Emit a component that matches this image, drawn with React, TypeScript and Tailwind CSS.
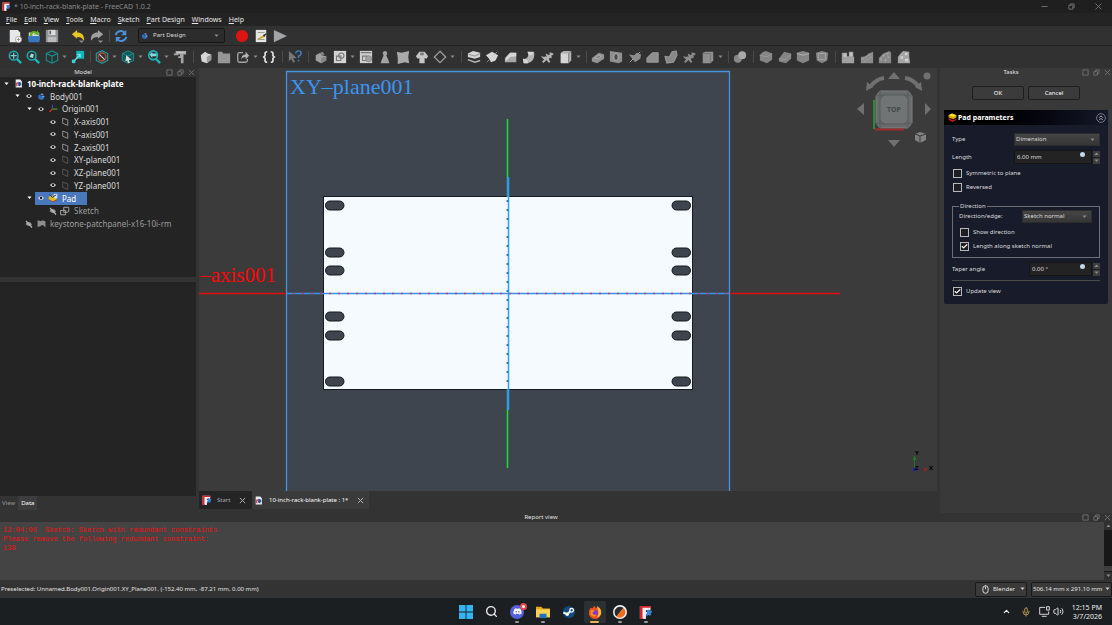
import React, { useState } from "react";
import { Search, Mic, ChevronUp, Volume2, Mouse, Check } from "lucide-react";
import { FaDiscord } from "react-icons/fa";

interface SvgProps {
  children: React.ReactNode;
  className?: string;
}

const Svg: React.FC<SvgProps> = ({ children, className = "size-[14px]" }) => {
  return (
    <svg viewBox="0 0 16 16" fill="none" className={`shrink-0 ${className}`} aria-hidden="true">
      {children}
    </svg>
  );
};

const Caret: React.FC<{ className?: string }> = ({ className = "" }) => (
  <svg viewBox="0 0 6 4" className={`w-[5px] shrink-0 fill-[#8a8a8a] ${className}`} aria-hidden="true">
    <path d="M0.5 0.5h5L3 3.5z" />
  </svg>
);

const FreeCadLogo: React.FC<{ className?: string }> = ({ className }) => (
  <Svg className={className}>
    <path d="M1 1h12v3H8v12H1z" fill="#d9dde2" />
    <path d="M1 1h13l-1 4H5v11H1z" fill="#d8262f" />
    <path d="M4 3h9v3H7v2h5v3H7v4H4z" fill="#f3f4f6" />
    <path d="M9 6l2-1 1 1.5 2-.5 1 2-1.500 1.200.5 1.800-2 1.200-1.200-1.200L9 13l-1.200-2L9 9z" fill="#3b82d9" />
  </Svg>
);

const DocIcon: React.FC<{ className?: string }> = ({ className }) => (
  <Svg className={className}>
    <path d="M3 1h8l3 3v11H3z" fill="#e9edf2" />
    <path d="M4 6h5v2H6v5H4z" fill="#c9232d" />
    <path d="M8 5l4 1 1 4-3 3-3-2z" fill="#28529b" />
  </Svg>
);

const BodyIcon: React.FC<{ className?: string }> = ({ className }) => (
  <Svg className={className}>
    <path d="M2 6l4-2 1 4 4 0 2 3-4 3-5-1-2-3z" fill="#2d6fc0" />
    <path d="M6 4l3-2 3 2-3 2zM7 8l4-2 3 2-3 2z" fill="#5b9ce6" />
  </Svg>
);

const PadIcon: React.FC<{ className?: string }> = ({ className }) => (
  <Svg className={className}>
    <path d="M1 9l7 4 7-3v2l-7 4-7-4z" fill="#c81e1e" />
    <path d="M1 4l6-3 8 3v4l-6 3-8-3z" fill="#d6a800" />
    <path d="M1 4l6-3 8 3-6 3z" fill="#f7e02a" />
  </Svg>
);

// the feature icon in the tree carries a sketch in front of the solid
const PadFeatureIcon: React.FC<{ className?: string }> = ({ className }) => (
  <Svg className={className}>
    <path d="M1 10l7 4 7-3-6-4z" fill="#c81e1e" />
    <path d="M1 6l6-2 7 3v3l-6 3-7-3z" fill="#e3b81a" />
    <path d="M9 1h6v7l-4 1-2-3z" fill="#cfe0f3" />
    <path d="M2 2l5 5 6-4" stroke="#1c3f78" strokeWidth="1.600" />
  </Svg>
);

const grey = "#b4b4b4";
const light = "#d6d6d6";
const dark = "#858585";

const icons: Record<string, React.ReactNode> = {
  new: (
    <>
      <path d="M2 1h9l3 3v11H2z" fill="#e6e8ea" />
      <circle cx="12" cy="12" r="3.500" fill="#fff" stroke="#9b9b9b" />
      <path d="M12 10v4M10 12h4" stroke="#888" />
    </>
  ),
  open: (
    <>
      <path d="M2 4h12v9H2z" fill="#d6d9dc" />
      <path d="M1 8h14l-1 7H2z" fill="#3978bf" />
      <path d="M3 8c0-5 4-7 8-5l1-2 2 6-6-1 1.500-1.500C7 4 6 6 6 8z" fill="#62b51c" />
    </>
  ),
  save: (
    <>
      <path d="M1 1h14v14H1z" fill="#8f9294" />
      <path d="M4 1h8v6H4z" fill="#d9dbdc" />
      <path d="M3 9h10v6H3z" fill="#b9bcbe" />
      <path d="M5 2h2v4H5z" fill="#666" />
    </>
  ),
  undo: (
    <>
      <path d="M1 6l6-5v3c5 0 8 3 8 8l-1 1c-1-3-3-4-7-4v2z" fill="#e8c523" />
      <path d="M9 13h6l-3 3z" fill="#8a8a8a" />
    </>
  ),
  redo: (
    <>
      <path d="M15 6L9 1v3c-5 0-8 3-8 8l1 1c1-3 3-4 7-4v2z" fill="#9ea1a3" />
      <path d="M9 13h6l-3 3z" fill="#8a8a8a" />
    </>
  ),
  refresh: (
    <>
      <path d="M2 7a6 6 0 0 1 10-3M14 9a6 6 0 0 1-10 3" stroke="#4c8fd6" strokeWidth="2.400" />
      <path d="M14 1v6H8zM2 15V9h6z" fill="#4c8fd6" />
    </>
  ),
  record: <circle cx="8" cy="8" r="7" fill="#dd1414" />,
  macro: (
    <>
      <path d="M2 1h12v14H2z" fill="#e4e6e2" />
      <path d="M4 4h8M4 12h8" stroke="#8b9a86" />
      <path d="M4 11l7-4 1 2-7 3z" fill="#c9a11a" />
      <path d="M10 7l5-3-3 5z" fill="#333" />
    </>
  ),
  play: <path d="M1 1l15 7-15 7z" fill="#a2a4a5" />,
  fitAll: (
    <>
      <circle cx="6.500" cy="6.500" r="5" stroke="#1fa6ad" strokeWidth="1.800" />
      <path d="M6.500 3v7M3 6.500h7" stroke="#7fcfd3" strokeWidth="1.400" />
      <path d="M10 10l5 5" stroke="#1fb6bd" strokeWidth="2.600" />
    </>
  ),
  fitSel: (
    <>
      <circle cx="6.500" cy="6.500" r="5" stroke="#1fa6ad" strokeWidth="1.800" />
      <path d="M4 8l2-4 3 1-1 4z" fill="#9fdfe2" />
      <path d="M10 10l5 5" stroke="#1fb6bd" strokeWidth="2.600" />
    </>
  ),
  cube: <path d="M1.500 4L8 1l6.500 3v8L8 15l-6.500-3zM1.500 4L8 7l6.500-3M8 7v8" stroke="#148f8f" strokeWidth="1.300" />,
  fly: (
    <>
      <path d="M6 1h9v9H6z" fill="#0fb5b9" />
      <path d="M1 11h4v4H1z" fill="#31d3d6" />
      <path d="M4 12l6-6M7 5h3.500v3.500" stroke="#7fe3e3" strokeWidth="1.300" />
    </>
  ),
  drawStyle: (
    <>
      <path d="M1.500 4L8 .8 14.500 4v8L8 15.200 1.500 12z" stroke="#1e9da0" strokeWidth="1.300" />
      <circle cx="8" cy="8" r="4.500" stroke="#b94a3e" strokeWidth="1.600" />
      <path d="M5 5l6 6" stroke="#c9c9c9" strokeWidth="1.500" />
    </>
  ),
  selectCube: (
    <>
      <path d="M1.500 4L8 1l6.500 3v8L8 15l-6.500-3z" fill="#12565a" stroke="#1c9396" />
      <path d="M2 4l6 3 6-3" stroke="#1c9396" />
      <path d="M6 6l6 5-3 .5 1 3-2 .5-1-3-2 1z" fill="#ddd" />
    </>
  ),
  zoomCam: (
    <>
      <circle cx="7" cy="6" r="5" stroke="#1fb6bd" strokeWidth="1.800" />
      <path d="M3 5l3-3v2h5v3H6v2z" fill="#7fd9dc" />
      <path d="M10 10l5 5" stroke="#1fb6bd" strokeWidth="2.600" />
    </>
  ),
  measure: (
    <>
      <path d="M3 1h12v4H3zM1 4h5v2H1zM8 5h4v10H9V9H6V7h2z" fill="#a5a5a5" />
      <path d="M4 3h10" stroke="#d0d0d0" />
    </>
  ),
  part: (
    <>
      <path d="M2 6l5-4 3 2 4 1v6l-5 4-6-2z" fill={light} />
      <path d="M9 8l5-3v6l-5 4z" fill="#9c9c9c" />
    </>
  ),
  folder: <path d="M1 2h5l1 2h8v11H1z" fill="#969696" />,
  share: (
    <>
      <path d="M8 3H4Q2 3 2 5v7q0 2 2 2h7q2 0 2-2v-2" stroke="#a5a5a5" strokeWidth="1.500" />
      <path d="M6 11c0-4 2-6 5-6V2l4 4.500-4 4V8C8 8 7 9 6 11z" fill={grey} />
    </>
  ),
  braces: (
    <path
      d="M6 2Q3.500 2 3.500 4v2.500L2 8l1.500 1.500V12q0 2 2.500 2M10 2q2.500 0 2.500 2v2.500L14 8l-1.500 1.500V12q0 2-2.500 2"
      stroke="#e2e2e2"
      strokeWidth="1.900"
    />
  ),
  whatsThis: (
    <>
      <path d="M1 1l9 8-4 .5 2 4-2 1-2-4-3 2z" fill="#777" />
      <path d="M9 4q0-3 3-3t3 2.500Q15 6 12 7v2M12 11v2" stroke="#3e7fc1" strokeWidth="1.700" />
    </>
  ),
  body: (
    <>
      <path d="M2 6l5-3 2 3 5 1v5l-6 3-6-3z" fill="#a0a0a0" />
      <path d="M7 3l3-1 2 3-3 1zM8 9l6-2v5l-6 3z" fill={dark} />
    </>
  ),
  sketch: (
    <>
      <path d="M1 1h14v14H1z" fill="#d4d4d4" />
      <path d="M4 7h5v5H4z" stroke="#777" strokeWidth="1.200" />
      <circle cx="9.500" cy="6.500" r="3" stroke="#777" strokeWidth="1.200" />
    </>
  ),
  sketchEdit: (
    <>
      <path d="M1 1h14v14H1z" fill="#cfcfcf" />
      <path d="M4 7h5v5H4zM2 3h12" stroke="#777" strokeWidth="1.200" />
      <circle cx="11" cy="10" r="3.500" fill="#a0a0a0" stroke="#888" />
    </>
  ),
  pawn: <path d="M8 1a2.800 2.800 0 0 1 1.500 5l2.500 6 1 3H3l1-3 2.500-6A2.800 2.800 0 0 1 8 1z" fill="#a5a5a5" />,
  surface: <path d="M1 2l5 1 9-2-1 7 1 7-5-1-8 2 0-7z" fill="#aaa" />,
  shirt: (
    <>
      <path d="M5 2h6l4 5-2 3-2-1v6H5V9l-2 1-2-3z" fill="#c5c5c5" />
      <path d="M6 3h4v3H6z" fill="#777" />
    </>
  ),
  diamond: <path d="M8 1.500L14.500 8 8 14.500 1.500 8z" stroke="#9c9c9c" strokeWidth="1.500" />,
  pad: (
    <>
      <path d="M1 4l6-3 8 2v5l-6 2-8-2z" fill={light} />
      <path d="M2 5l7 2 6-3" stroke="#888" />
      <path d="M1 11l8 3 6-2" stroke={grey} strokeWidth="1.800" />
    </>
  ),
  revolve: (
    <>
      <path d="M1 6l7-4 7 4-3 6-5 2-3-5z" fill={light} />
      <path d="M2 14l4-4M11 5l3-3" stroke="#8d8d8d" />
    </>
  ),
  loft: (
    <>
      <path d="M1 14V9l6-6h7v11z" fill="#a6a6a6" />
      <path d="M7 3h7v4l-7 1-5 5V9z" fill={light} />
    </>
  ),
  pipe: (
    <>
      <path d="M1 10c5 1 7-3 6-8l7 1c1 8-4 13-12 12z" fill={grey} />
      <path d="M6 2h8l-3 4H8zM1 10l5 1 1 4-5 0z" fill={light} />
    </>
  ),
  helix: <path d="M2 14l3-3-2-2 5 1-1-4 4 2 0-4 3 1M4 8l4 2 3-5M7 11l3 3" stroke={grey} strokeWidth="2.200" />,
  prim: (
    <>
      <path d="M2 3l3-2h9v11l-3 3H2z" fill="#b0b0b0" />
      <path d="M2 4h9v11H2z" fill={light} />
      <path d="M11 4l3-3M11 4v11" stroke="#777" />
    </>
  ),
  pocket: (
    <>
      <path d="M1 9l8-6 6 2v5l-8 5-6-2z" fill="#939393" />
      <path d="M4 9l5-3 3 1-5 3z" fill="#7a7a7a" stroke="#b0b0b0" />
    </>
  ),
  hole: (
    <>
      <path d="M1 1l14 2v10l-4 2-10-2z" fill="#8f8f8f" />
      <ellipse cx="8" cy="8" rx="2.500" ry="4" fill="#4a4a4a" stroke="#b9b9b9" />
    </>
  ),
  groove: (
    <>
      <path d="M1 5l6 1 3-3 5 2-1 5-6 4-3-4z" fill="#8c8c8c" />
      <path d="M2 14l4-4M11 5l3-3" stroke="#b0b0b0" />
    </>
  ),
  subLoft: <path d="M1 14V9l6-6h7v11z" fill="#8f8f8f" stroke="#9c9c9c" />,
  subPipe: <path d="M1 7l5 1 3-6 5-1 1 5-4 8-8 1z" fill="#888" stroke="#a0a0a0" />,
  subHelix: <path d="M2 14l3-3-2-2 5 1-1-4 4 2 0-4 3 1M4 8l4 2 3-5M7 11l3 3" stroke="#8d8d8d" strokeWidth="2.200" />,
  subPrim: (
    <>
      <path d="M2 3l3-1h9v10l-3 3H2z" fill="#8f8f8f" />
      <path d="M2 4h9v11" stroke="#747474" />
    </>
  ),
  boolean: (
    <>
      <circle cx="5.500" cy="10" r="4.500" fill="#888" />
      <circle cx="10.500" cy="6" r="4.500" fill="#a9a9a9" />
    </>
  ),
  fillet: (
    <>
      <path d="M1 6q2-4 7-5l7 3v7l-6 4-8-3z" fill="#858585" />
      <path d="M1 6l8 2 6-4" stroke="#9a9a9a" />
    </>
  ),
  chamfer: (
    <>
      <path d="M1 10l6-8 8 2v6l-6 5-8-2z" fill="#858585" />
      <path d="M1 10l8 1 6-6" stroke="#9a9a9a" />
    </>
  ),
  draft: (
    <>
      <path d="M1 3l7-2 7 2v9l-7 3-7-3z" fill="#858585" />
      <path d="M1 4l7 2 7-2" stroke="#b5b5b5" />
    </>
  ),
  thickness: (
    <>
      <path d="M1 3l7-2 7 2-1 9-6 3-6-3z" fill="#858585" />
      <path d="M4 4h8v7H4z" stroke="#a8a8a8" />
    </>
  ),
  mirror: (
    <>
      <path d="M1 3h6v4h2V2h5v5l1 1v7H1z" fill="#a0a0a0" />
      <path d="M3 4h3v4H3zM10 3h3v4h-3z" fill="#c4c4c4" />
    </>
  ),
  linear: (
    <>
      <path d="M1 8l5-1 4-3 5-2v13H1z" fill="#8c8c8c" />
      <path d="M2 11l11-7M4 14l9-6" stroke="#a5a5a5" strokeDasharray="3 1" />
    </>
  ),
  polar: (
    <>
      <path d="M1 9l5-5 7-3 2 2v12H1z" fill="#888" />
      <path d="M3 12q2-7 9-8M8 13q1-4 5-5" stroke="#a5a5a5" strokeWidth="2" strokeDasharray="3 2" />
    </>
  ),
  multi: (
    <>
      <path d="M1 8l3-4 3-3 7 1v6l1 7H1z" fill="#a5a5a5" />
      <path d="M4 7h3v3H4zM9 3h3v3H9zM9 10h4v3H9z" fill="#cfcfcf" />
    </>
  ),
};

interface ToolProps {
  name: string;
  menu?: boolean;
}

const Tool: React.FC<ToolProps> = ({ name, menu }) => {
  return (
    <button type="button" aria-label={name} className="flex items-center gap-[3px] hover:brightness-125">
      <Svg>{icons[name]}</Svg>
      {menu && <Caret />}
    </button>
  );
};

// a trailing "+" marks a tool that opens a menu
const toolGroups = [
  { width: "w-[77px]", sep: "", tools: ["fitAll", "fitSel", "cube+", "fly"] },
  { width: "w-[92px]", sep: "w-[10px]", tools: ["drawStyle+", "selectCube+", "zoomCam+", "measure"] },
  { width: "w-[77px]", sep: "w-3", tools: ["part", "folder", "share+", "braces"] },
  { width: "w-[14px]", sep: "w-3", tools: ["whatsThis"] },
  { width: "w-[141px]", sep: "w-3", tools: ["body", "sketch+", "sketchEdit", "pawn", "surface", "shirt", "diamond+"] },
  { width: "w-[114px]", sep: "w-3", tools: ["pad", "revolve", "loft", "pipe", "helix", "prim+"] },
  { width: "w-[132px]", sep: "w-[10px]", tools: ["pocket", "hole", "groove", "subLoft", "subPipe", "subHelix", "subPrim+"] },
  { width: "w-[14px]", sep: "w-[10px]", tools: ["boolean"] },
  { width: "w-[70px]", sep: "w-3", tools: ["fillet", "chamfer", "draft", "thickness"] },
  { width: "w-[70px]", sep: "w-3", tools: ["mirror", "linear", "polar", "multi"] },
];

const Divider: React.FC = () => <span className="h-3 w-px shrink-0 bg-[#4a4a4a]"></span>;

const TitleBar: React.FC = () => {
  return (
    <header className="flex h-[13px] items-center bg-[#1f1f1f] pl-[2px] text-[7px] text-[#8b8b8b]">
      <FreeCadLogo className="size-[9px]" />
      <h1 className="ml-[3px]">* 10-inch-rack-blank-plate - FreeCAD 1.0.2</h1>
      <div className="ml-auto flex gap-5 pr-[10px]">
        <button type="button" aria-label="Minimize">
          <Svg className="size-[7px]"><path d="M1 8h14" stroke="#777" strokeWidth="2" /></Svg>
        </button>
        <button type="button" aria-label="Restore">
          <Svg className="size-[7px]">
            <path d="M2 5h9v9H2zM5 5V2h9v9h-3" stroke="#777" strokeWidth="2" />
          </Svg>
        </button>
        <button type="button" aria-label="Close">
          <Svg className="size-[7px]"><path d="M1 1l14 14M15 1L1 15" stroke="#777" strokeWidth="2" /></Svg>
        </button>
      </div>
    </header>
  );
};

const menus = ["File", "Edit", "View", "Tools", "Macro", "Sketch", "Part Design", "Windows", "Help"];

const MenuBar: React.FC = () => {
  return (
    <nav className="flex h-[13px] items-center gap-[7px] bg-[#242424] pl-[6px] text-[7px] text-[#e8e8e8]">
      {menus.map((item) => (
        <button key={item} type="button">
          <span className="underline">{item[0]}</span>
          {item.slice(1)}
        </button>
      ))}
    </nav>
  );
};

const Toolbars: React.FC = () => {
  return (
    <div className="bg-[#313131]">
      <div className="flex h-5 items-center border-b border-[#242424] pl-2">
        <div className="flex w-[51px] justify-between">
          <Tool name="new" />
          <Tool name="open" />
          <Tool name="save" />
        </div>
        <div className="ml-3 flex gap-[5px]">
          <Tool name="undo" />
          <Tool name="redo" />
        </div>
        <div className="flex w-[10px] justify-center"><Divider /></div>
        <Tool name="refresh" />
        <div className="relative ml-[10px] flex w-[87px] items-center">
          <span className="pointer-events-none absolute left-[3px]"><BodyIcon className="size-[8px]" /></span>
          <select
            aria-label="Workbench"
            className="h-[15px] w-full appearance-none rounded-[2px] border border-[#161616] bg-[#2c2c2c] pl-[14px] text-[#dddddd]"
          >
            <option>Part Design</option>
          </select>
          <Caret className="pointer-events-none absolute right-[6px]" />
        </div>
        <div className="ml-[10px] flex gap-[5px]">
          <Tool name="record" />
          <Tool name="macro" />
          <Tool name="play" />
        </div>
      </div>
      <div className="flex h-[22px] items-center pl-2">
        {toolGroups.map((group, i) => (
          <React.Fragment key={i}>
            {i > 0 && (
              <span className={`flex shrink-0 justify-center ${group.sep}`}><Divider /></span>
            )}
            <div className={`flex shrink-0 justify-between ${group.width}`}>
              {group.tools.map((t) => (
                <Tool key={t} name={t.replace("+", "")} menu={t.endsWith("+")} />
              ))}
            </div>
          </React.Fragment>
        ))}
      </div>
    </div>
  );
};

interface DockTitleProps {
  title: string;
}

const DockTitle: React.FC<DockTitleProps> = ({ title }) => {
  return (
    <div className="flex h-[9px] items-center text-[#e0e0e0]">
      <h2 className="flex-1 text-center">{title}</h2>
      <span className="flex gap-1 pr-px">
        <Svg className="size-[7px]"><path d="M2 2h12v12H2z" stroke="#747474" strokeWidth="2" /></Svg>
        <Svg className="size-[7px]"><path d="M2 6h8v8H2zM6 6V2h8v8h-4" stroke="#747474" strokeWidth="2" /></Svg>
        <Svg className="size-[7px]"><path d="M2 2l12 12M14 2L2 14" stroke="#747474" strokeWidth="2" /></Svg>
      </span>
    </div>
  );
};

const Eye: React.FC = () => (
  <Svg className="size-[6px]">
    <path d="M0 8q8-10 16 0-8 10-16 0z" fill="#e8e8e8" />
    <circle cx="8" cy="8" r="3.500" fill="#222" />
  </Svg>
);

const EyeOff: React.FC = () => (
  <Svg className="size-[8px]">
    <path d="M1 8q7-8 13 1-6 6-13-1z" fill="#9a9a9a" />
    <path d="M2 2l12 13" stroke="#b5b5b5" strokeWidth="2.500" />
  </Svg>
);

const PlaneIcon: React.FC<{ color: string }> = ({ color }) => (
  <Svg className="size-[9px]">
    <path d="M3 2l9 3v10l-9-4z" stroke={color} strokeWidth="1.600" />
  </Svg>
);

const treeIcons: Record<string, React.ReactNode> = {
  doc: <DocIcon className="size-[9px]" />,
  body: <BodyIcon className="size-[9px]" />,
  origin: (
    <Svg className="size-[9px]">
      <path d="M6 9V1" stroke="#3558c9" strokeWidth="1.600" />
      <path d="M6 9l-5 5" stroke="#e02a2a" strokeWidth="2.400" />
      <path d="M6 9h9" stroke="#4c8d20" strokeWidth="2.400" />
    </Svg>
  ),
  axis: <PlaneIcon color="#9a9a9a" />,
  plane: <PlaneIcon color="#5a5a5a" />,
  pad: <PadFeatureIcon className="size-[10px]" />,
  sketch: (
    <Svg className="size-[10px]">
      <path d="M1 7h8v7H1z" stroke="#aaa" strokeWidth="1.500" />
      <path d="M6 2h8v7l-3 1H6z" stroke="#aaa" strokeWidth="1.500" />
    </Svg>
  ),
  mesh: (
    <Svg className="size-[9px]"><path d="M1 2l6 2 2-2 6 2v11l-4-4-3 0-2 2-5 1z" fill="#8d8d8d" /></Svg>
  ),
};

interface TreeRow {
  label: string;
  icon: string;
  indent: string;
  arrow?: boolean;
  eye?: "on" | "off";
  style?: string;
}

const tree: TreeRow[] = [
  { label: "10-inch-rack-blank-plate", icon: "doc", indent: "pl-0", arrow: true, style: "font-bold text-white" },
  { label: "Body001", icon: "body", indent: "pl-[11px]", arrow: true, eye: "on" },
  { label: "Origin001", icon: "origin", indent: "pl-[23px]", arrow: true, eye: "on" },
  { label: "X-axis001", icon: "axis", indent: "pl-[35px]", eye: "on" },
  { label: "Y-axis001", icon: "axis", indent: "pl-[35px]", eye: "on" },
  { label: "Z-axis001", icon: "axis", indent: "pl-[35px]", eye: "on" },
  { label: "XY-plane001", icon: "plane", indent: "pl-[35px]", eye: "on" },
  { label: "XZ-plane001", icon: "plane", indent: "pl-[35px]", eye: "on" },
  { label: "YZ-plane001", icon: "plane", indent: "pl-[35px]", eye: "on" },
  { label: "Pad", icon: "pad", indent: "pl-[23px]", arrow: true, eye: "on" },
  { label: "Sketch", icon: "sketch", indent: "pl-[35px]", eye: "off", style: "text-[#9c9c9c]" },
  { label: "keystone-patchpanel-x16-10i-rm", icon: "mesh", indent: "pl-[11px]", eye: "off", style: "text-[#9c9c9c]" },
];

const ModelPanel: React.FC = () => {
  const [selected, setSelected] = useState("Pad");

  return (
    <aside className="flex w-[196px] shrink-0 flex-col">
      <DockTitle title="Model" />
      <div className="h-[200px] bg-[#242424]">
        <ul className="grid h-[153px] auto-rows-fr text-[8px] text-[#dadada]">
          {tree.map((row) => (
            <li key={row.label} className={`flex items-center ${row.indent}`}>
              <span className="flex w-3 shrink-0 justify-center">
                {row.arrow && <Caret className="fill-white" />}
              </span>
              <button
                type="button"
                onClick={() => setSelected(row.label)}
                className={`flex h-full items-center pr-[11px] whitespace-nowrap ${
                  selected === row.label ? "bg-[#4a78bd] text-white" : ""
                } ${row.style ?? ""}`}
              >
                {row.eye && (
                  <span className="flex w-3 justify-center">{row.eye === "on" ? <Eye /> : <EyeOff />}</span>
                )}
                <span className="mr-[3px] flex w-3 justify-center">{treeIcons[row.icon]}</span>
                {row.label}
              </button>
            </li>
          ))}
        </ul>
      </div>
      <div className="mt-[5px] flex-1 bg-[#242424]"></div>
      <div className="flex h-[14px] items-center">
        <button type="button" className="h-full px-[2px] text-[#9a9a9a]">View</button>
        <button type="button" className="ml-px h-full bg-[#3d3d3d] px-[3px] text-white">Data</button>
      </div>
      <div className="h-[3px]"></div>
    </aside>
  );
};

const slotRows = [205, 252, 270, 316, 335, 381];

const NavigationCube: React.FC = () => (
  <g fill="#707070">
    <path d="M894 72l6 7h-12zM894 147l6-7h-12zM857 109l7-6v12zM931 109l-6-6v12z" />
    <path d="M884 78q-8 1-14 9" stroke="#707070" strokeWidth="4" fill="none" />
    <path d="M866 91l1-9 6 5z" />
    <path d="M905 78q8 1 14 9" stroke="#707070" strokeWidth="4" fill="none" />
    <path d="M922 91l-1-9-6 5z" />
    <circle cx="927" cy="76" r="3.500" />
    <path d="M880 91h28l4 5v27l-4 5h-28l-4-5V96z" fill="#686b6c" stroke="#7c7f80" />
    <path d="M884 95h20l4 4v21l-4 4h-20l-4-4V99z" fill="#707475" stroke="#585b5c" />
    <path d="M876 96l8-1M880 91v8M912 96l-8-1M908 91v8M876 123l8 1M880 128v-8M912 123l-8 1M908 128v-8" stroke="#585b5c" />
    <text x="894" y="112" textAnchor="middle" className="fill-[#44494b] text-[7px] font-bold">TOP</text>
    <path d="M874 100v29" stroke="#2f8a34" strokeWidth="2" />
    <path d="M875 129.500h29" stroke="#a32a2a" strokeWidth="2" />
    <path d="M915 134l5-2 6 2v6l-6 3-5-3z" fill="#828282" />
    <path d="M915 134l5 2 6-2M920 136v7" stroke="#3b3b3b" fill="none" />
  </g>
);

const Viewport: React.FC = () => {
  return (
    <svg
      viewBox="199 68 738 423"
      preserveAspectRatio="xMidYMin slice"
      className="min-h-0 w-full flex-1 bg-[#3b3b3b]"
      role="img"
      aria-label="3D view"
    >
      <path d="M286.500 500V71.500h443V500" fill="#3f454f" stroke="#4393df" strokeWidth="1.300" />
      <text x="290" y="94" className="fill-[#3d94ee] font-['Liberation_Serif',serif] text-[22px]">
        XY–plane001
      </text>
      <text x="276" y="282" textAnchor="end" className="fill-[#ff0505] font-['Liberation_Serif',serif] text-[21px]">
        –axis001
      </text>
      <rect x="323.500" y="196.500" width="369" height="193" fill="#f5faff" stroke="#171b20" />
      {slotRows.map((y) => (
        <g key={y} fill="#3f454f" stroke="#14181d">
          <rect x="325.500" y={y - 4} width="18.500" height="9" rx="4.500" />
          <rect x="672" y={y - 4} width="18.500" height="9" rx="4.500" />
        </g>
      ))}
      <path d="M199 293.500h87M730 293.500h110" stroke="#e01010" strokeWidth="1.500" />
      <path d="M286 293.500h444" stroke="#3b8ff0" strokeWidth="1.500" />
      <path d="M293 293.500h437" stroke="#b8405c" strokeDasharray="2 7" strokeWidth="1.500" />
      <path d="M507.500 119v58M507.500 410v58" stroke="#18e032" strokeWidth="1.500" />
      <path d="M508 177v20M508 390v20" stroke="#2da0dc" strokeWidth="2.500" />
      <path d="M508.500 196v195" stroke="#3b9bf0" strokeWidth="1.500" />
      <path d="M507.500 200v190" stroke="#1c88b8" strokeDasharray="2 7" strokeWidth="2" />
      <NavigationCube />
      <path d="M914.500 469v-9" stroke="#1f7a24" />
      <path d="M912.500 460l2-5 2 5z" fill="#1f7a24" />
      <circle cx="914.500" cy="469.500" r="1.700" fill="#1a1ab8" />
      <circle cx="925.500" cy="469.500" r="1.700" fill="#8f2323" />
      <g className="fill-black text-[6px] font-bold">
        <text x="915" y="455">Y</text>
        <text x="915" y="470">Z</text>
        <text x="929" y="470">X</text>
      </g>
    </svg>
  );
};

const TabClose: React.FC = () => (
  <Svg className="size-[7px]"><path d="M2 2l12 12M14 2L2 14" stroke="#b5b5b5" strokeWidth="2.200" /></Svg>
);

const CenterArea: React.FC = () => {
  return (
    <main className="flex min-w-0 flex-1 flex-col">
      <Viewport />
      <div className="flex h-[18px]">
        <button type="button" className="flex w-[53px] items-center bg-[#242424] pl-[3px] text-[#a8a8a8]">
          <FreeCadLogo className="size-[10px]" />
          <span className="mr-auto ml-[5px]">Start</span>
          <span className="mr-[6px]"><TabClose /></span>
        </button>
        <button type="button" className="flex w-[117px] items-center bg-[#3b3b3b] pl-[2px] text-white">
          <DocIcon className="size-[9px]" />
          <span className="mr-auto ml-[6px]">10-inch-rack-blank-plate : 1*</span>
          <span className="mr-[5px]"><TabClose /></span>
        </button>
      </div>
      <div className="h-[4px]"></div>
    </main>
  );
};

interface CheckFieldProps {
  label: string;
  checked?: boolean;
}

const CheckField: React.FC<CheckFieldProps> = ({ label, checked }) => {
  return (
    <label className="flex h-[14px] items-center gap-1">
      <span className="relative flex size-[9px] items-center justify-center">
        <input
          type="checkbox"
          defaultChecked={checked}
          className="peer size-[9px] appearance-none border border-[#b8b8b8] bg-[#1d1f25]"
        />
        <Check className="pointer-events-none absolute hidden size-[7px] text-white peer-checked:block" strokeWidth={4} />
      </span>
      {label}
    </label>
  );
};

interface FieldProps {
  id: string;
  value: string;
  width: string;
}

const SelectField: React.FC<FieldProps> = ({ id, value, width }) => {
  return (
    <span className={`relative flex items-center ${width}`}>
      <select
        id={id}
        className="h-[13px] w-full appearance-none border border-[#2c2c2c] bg-linear-to-b from-[#454545] to-[#363636] pl-px text-[#dcdcdc]"
      >
        <option>{value}</option>
      </select>
      <Caret className="pointer-events-none absolute right-[5px]" />
    </span>
  );
};

const SpinField: React.FC<FieldProps> = ({ id, value, width }) => {
  return (
    <span className={`relative flex h-[14px] items-center ${width}`}>
      <input
        id={id}
        type="text"
        defaultValue={value}
        className="h-full w-full min-w-0 border border-[#151515] bg-[#232323] pl-[2px] text-[#dcdcdc]"
      />
      <span className="absolute top-[2px] right-[15px] size-[5px] rounded-full bg-[#c3d6ea]"></span>
      <span className="flex w-2 shrink-0 flex-col gap-px pl-px">
        <button type="button" aria-label="Increase" className="flex h-[6px] items-center justify-center bg-[#3d3d3d]">
          <Caret className="w-[3px] rotate-180" />
        </button>
        <button type="button" aria-label="Decrease" className="flex h-[6px] items-center justify-center bg-[#3d3d3d]">
          <Caret className="w-[3px]" />
        </button>
      </span>
    </span>
  );
};

const TasksPanel: React.FC = () => {
  return (
    <aside className="ml-[3px] flex w-[172px] shrink-0 flex-col bg-[#393939]">
      <DockTitle title="Tasks" />
      <div className="mt-[9px] flex justify-center gap-1">
        <button type="button" className="h-[14px] w-[52px] rounded-[2px] border border-[#1d1d1d] bg-[#3b3b3b] text-white">
          OK
        </button>
        <button type="button" className="h-[14px] w-[52px] rounded-[2px] border border-[#1d1d1d] bg-[#3b3b3b] text-white">
          Cancel
        </button>
      </div>
      <section className="mx-1 mt-[10px] rounded-[2px] bg-[#181b2a] pb-[6px] text-[#dcdcdc]">
        <div className="flex h-[15px] items-center gap-px bg-linear-to-r from-black to-[#151828] pr-[2px] pl-1">
          <PadIcon className="size-[9px]" />
          <h3 className="text-[7px] font-bold text-white">Pad parameters</h3>
          <button type="button" aria-label="Collapse" className="ml-auto">
            <Svg className="size-[10px]">
              <circle cx="8" cy="8" r="7" stroke="#8b8b96" strokeWidth="1.300" />
              <path d="M5 7.500l3-3 3 3M5 11.500l3-3 3 3" stroke="#b4b4bd" strokeWidth="1.500" />
            </Svg>
          </button>
        </div>
        <div className="px-2">
          <div className="mt-2 flex items-center justify-between">
            <label htmlFor="type">Type</label>
            <SelectField id="type" value="Dimension" width="w-[86px]" />
          </div>
          <div className="mt-1 mb-[2px] flex items-center justify-between">
            <label htmlFor="length">Length</label>
            <SpinField id="length" value="6.00 mm" width="w-[86px]" />
          </div>
          <div className="pl-px">
            <CheckField label="Symmetric to plane" />
            <CheckField label="Reversed" />
          </div>
          <fieldset className="mt-2 border border-[#6c6f78] pr-[7px] pb-[4px] pl-[6px]">
            <legend className="h-2 px-px leading-[8px]">Direction</legend>
            <div className="mb-[2px] flex items-center justify-between">
              <label htmlFor="edge">Direction/edge:</label>
              <SelectField id="edge" value="Sketch normal" width="w-[70px]" />
            </div>
            <div className="pl-px">
              <CheckField label="Show direction" />
              <CheckField label="Length along sketch normal" checked />
            </div>
          </fieldset>
          <div className="mt-[4px] flex items-center justify-between">
            <label htmlFor="taper">Taper angle</label>
            <SpinField id="taper" value="0.00 °" width="w-[71px]" />
          </div>
          <hr className="mt-1 mb-[3px] border-[#4b4b4b]" />
          <div className="pl-px">
            <CheckField label="Update view" checked />
          </div>
        </div>
      </section>
    </aside>
  );
};

const ReportView: React.FC = () => {
  return (
    <section>
      <DockTitle title="Report view" />
      <div className="flex h-[58px] bg-[#444444]">
        <pre className="flex-1 pt-1 pl-[3px] font-['Liberation_Mono',monospace] text-[7px] leading-[9px] text-[#f01010]">
          {"12:04:06  Sketch: Sketch with redundant constraints\nPlease remove the following redundant constraint:\n138"}
        </pre>
        <div className="flex w-2 flex-col items-center justify-between bg-[#181818]">
          <span className="flex h-2 w-full items-center justify-center bg-[#303030]"><Caret className="w-[3px] rotate-180" /></span>
          <span className="mt-auto mb-px h-[5px] w-full bg-[#3f3f3f]"></span>
          <span className="flex h-2 w-full items-center justify-center bg-[#303030]"><Caret className="w-[3px]" /></span>
        </div>
      </div>
    </section>
  );
};

const StatusBar: React.FC = () => {
  return (
    <footer className="flex h-[18px] items-center bg-[#333333] text-[#e2e2e2]">
      <p className="mr-auto pl-px">
        Preselected: Unnamed.Body001.Origin001.XY_Plane001. (-152.40 mm, -87.21 mm, 0.00 mm)
      </p>
      <button
        type="button"
        className="mr-1 flex h-[15px] w-[52px] items-center justify-end gap-[3px] rounded-[2px] border border-[#191919] bg-[#3a3a3a] pr-px"
      >
        <Mouse className="size-[9px]" strokeWidth={2.5} />
        Blender
        <Caret className="ml-[2px] fill-[#cccccc]" />
      </button>
      <button
        type="button"
        className="flex h-[15px] w-[81px] items-center justify-between rounded-[2px] border border-[#191919] bg-[#3a3a3a] px-px whitespace-nowrap"
      >
        506.14 mm x 291.10 mm
        <Caret className="fill-[#cccccc]" />
      </button>
    </footer>
  );
};

interface TaskIconProps {
  name: string;
  mark?: string;
  active?: boolean;
  children: React.ReactNode;
}

const TaskIcon: React.FC<TaskIconProps> = ({ name, mark, active, children }) => {
  return (
    <button
      type="button"
      aria-label={name}
      className={`relative flex h-[22px] w-[22px] items-center justify-center rounded-[2px] ${active ? "bg-[#2d3032]" : ""}`}
    >
      {children}
      {mark && <span className={`absolute bottom-0 h-[2px] rounded-full ${mark}`}></span>}
    </button>
  );
};

const TaskBar: React.FC = () => {
  return (
    <div className="flex h-[27px] items-center bg-[#1b1f21] px-[10px] text-[#eeeeee]">
      <div className="flex-1"></div>
      <div className="flex w-[202px] items-center justify-between">
        <TaskIcon name="Start">
          <Svg>
            <path d="M0 0h7.500v7.500H0zM8.500 0H16v7.500H8.500zM0 8.500h7.500V16H0zM8.500 8.500H16V16H8.500z" fill="#35b4f0" />
          </Svg>
        </TaskIcon>
        <TaskIcon name="Search"><Search className="size-[13px]" strokeWidth={2.5} /></TaskIcon>
        <TaskIcon name="Discord" mark="w-[4px] bg-[#9a9a9a]">
          <span className="flex size-[14px] items-center justify-center rounded-full bg-[#5560e0]">
            <FaDiscord className="size-[9px] text-white" />
          </span>
          <span className="absolute top-[2px] right-[1px] size-[7px] rounded-full border-2 border-[#e84848] bg-white"></span>
        </TaskIcon>
        <TaskIcon name="Files" mark="w-[4px] bg-[#9a9a9a]">
          <Svg>
            <path d="M0 2h6l2 2h8v10H0z" fill="#e8a91e" />
            <path d="M0 5h16v9H0z" fill="#fbd255" />
            <path d="M4 10h8v5H4z" fill="#1e73c4" />
          </Svg>
        </TaskIcon>
        <TaskIcon name="Steam">
          <Svg>
            <circle cx="8" cy="8" r="7" fill="#124a80" />
            <path d="M1.500 8.500l4.500 2 4-4" stroke="#e8eef4" strokeWidth="2.400" />
            <circle cx="11" cy="6" r="2.800" fill="#fff" />
            <circle cx="11" cy="6" r="1.300" fill="#124a80" />
            <circle cx="6" cy="10.500" r="2" fill="#fff" />
          </Svg>
        </TaskIcon>
        <TaskIcon name="Firefox" mark="w-[9px] bg-[#e9b44c]" active>
          <Svg>
            <path d="M3 3l2 1 2-3 2 2q6 0 6 6a7 7 0 0 1-14 0q0-4 2-6z" fill="#f4511e" />
            <path d="M10 1q6 3 5 9-2 4-5 4 4-4 0-13z" fill="#ffc02e" />
            <circle cx="8" cy="9" r="3.300" fill="#7a3ad1" />
            <path d="M3 6q3-1 5 1-3 0-3 2 1 3 5 2-3 4-7 0z" fill="#ff8f1f" />
          </Svg>
        </TaskIcon>
        <TaskIcon name="Slicer" mark="w-[4px] bg-[#9a9a9a]">
          <Svg>
            <circle cx="8" cy="8" r="8" fill="#f4f4f4" />
            <path d="M12 3.500L4 13a5.500 5.500 0 0 1 8-9.500z" fill="#2a2a2a" />
            <path d="M12 3.500a5.500 5.500 0 0 1-8 9.500z" fill="#ee6d1f" />
          </Svg>
        </TaskIcon>
        <TaskIcon name="FreeCAD" mark="w-[4px] bg-[#9a9a9a]"><FreeCadLogo /></TaskIcon>
      </div>
      <div className="flex flex-1 items-center justify-end">
        <ChevronUp className="mr-[10px] size-[9px]" strokeWidth={3} />
        <Mic className="mr-2 size-[10px] text-[#c9a959]" />
        <Svg className="mr-[3px] size-[11px]">
          <path d="M9 2H1v10h13V8M4 15h7" stroke="#ddd" strokeWidth="1.400" />
          <path d="M11 1h4v5h-4z" stroke="#ddd" strokeWidth="1.400" />
        </Svg>
        <Volume2 className="size-[11px]" />
        <time className="ml-2 text-right text-[7px] leading-[9px]">
          12:15 PM
          <br />
          3/7/2026
        </time>
      </div>
    </div>
  );
};

const App: React.FC = () => {
  return (
    <div className="flex h-screen flex-col overflow-hidden bg-[#333333] font-['Noto_Sans',sans-serif] text-[6px] leading-[9px]">
      <TitleBar />
      <MenuBar />
      <Toolbars />
      <div className="flex min-h-0 flex-1">
        <ModelPanel />
        <div className="w-[3px] shrink-0"></div>
        <CenterArea />
        <TasksPanel />
      </div>
      <ReportView />
      <StatusBar />
      <TaskBar />
    </div>
  );
};

export default App;
